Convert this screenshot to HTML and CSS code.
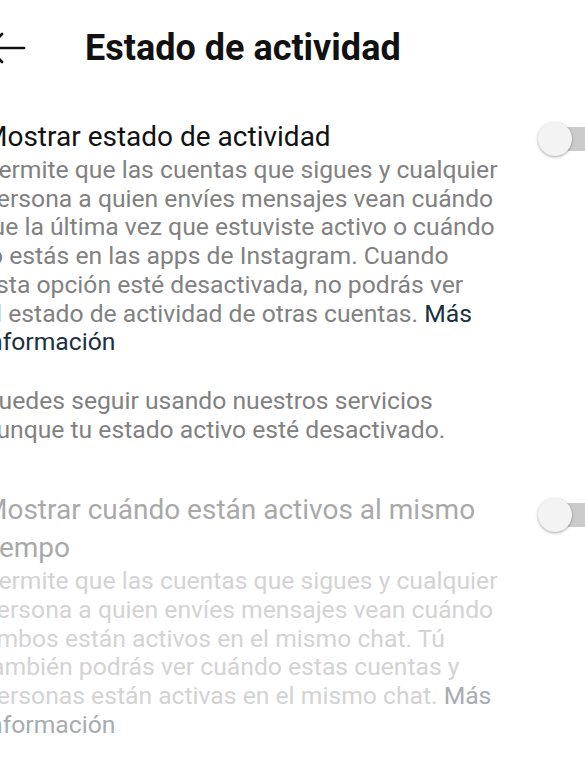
FILE: index.html
```html
<!DOCTYPE html>
<html lang="es">
<head>
<meta charset="UTF-8" />
<meta name="viewport" content="width=device-width, initial-scale=1.0" />
<title>Estado de actividad</title>
<link rel="stylesheet" href="styles.css">
</head>
<body>
<div class="page">
  <div class="header">
    <svg class="back" width="45" height="36" viewBox="0 0 45 36">
      <path d="M5 18 H41 M19 4 L5 18 L19 32" fill="none" stroke="#111" stroke-width="2.7" stroke-linecap="round" stroke-linejoin="round"/>
    </svg>
    <h1 class="title">Estado de actividad</h1>
  </div>

  <div class="section">
    <div class="row">
      <div class="text">
        <div class="label">Mostrar estado de actividad</div>
        <p class="desc">Permite que las cuentas que sigues y cualquier persona a quien envíes mensajes vean cuándo fue la última vez que estuviste activo o cuándo lo estás en las apps de Instagram. Cuando esta opción esté desactivada, no podrás ver el&nbsp;estado de actividad de otras cuentas. <span class="link">Más información</span></p>
        <p class="desc note">Puedes seguir usando nuestros servicios aunque tu estado activo esté desactivado.</p>
      </div>
      <div class="toggle"><div class="knob"></div></div>
    </div>
  </div>

  <div class="section disabled">
    <div class="row">
      <div class="text">
        <div class="label">Mostrar cuándo están activos al mismo tiempo</div>
        <p class="desc">Permite que las cuentas que sigues y cualquier persona a quien envíes mensajes vean cuándo ambos están activos en el mismo chat. Tú también podrás ver cuándo estas cuentas y personas están activas en el mismo chat. <span class="link">Más información</span></p>
      </div>
      <div class="toggle"><div class="knob"></div></div>
    </div>
  </div>
</div>
</body>
</html>
```

FILE: styles.css
```css
body{margin:0;padding:0;font-family:Roboto,"Noto Sans",sans-serif;background:#fff;overflow:hidden;}
.page{width:660px;margin-left:-17px;}
.header{display:flex;align-items:center;height:42px;padding-top:27px;}
.back{flex:none;}
.title{margin:0 0 0 57px;font-size:36px;font-weight:700;line-height:42px;color:#111;}
.section{padding-top:49px;}
.section + .section{padding-top:47px;}
.row{display:flex;align-items:flex-start;}
.text{width:515.5px;flex:none;}
.label{font-size:28px;line-height:38px;color:#121212;}
.desc{margin:0;font-size:24.7px;line-height:28.7px;color:#818181;}
.section:first-child .desc:first-of-type{margin-top:5px;}
.desc.note{margin-top:30px;}
.link{color:#1b3142;}
.toggle{position:relative;flex:none;margin:9px 0 0 37px;width:70px;height:24px;}
.toggle::before{content:"";position:absolute;left:18px;top:0;width:60px;height:24px;border-radius:12px;background:#cbcbcb;}
.knob{position:absolute;left:2px;top:-5px;width:34px;height:34px;border-radius:50%;background:#f3f3f3;box-shadow:0 1px 3px rgba(0,0,0,0.35);}
.disabled .toggle{margin-top:12px;}
.disabled .label{color:#a9a9a9;}
.disabled .desc{color:#d3d3d3;}
.disabled .link{color:#a6adb1;}
```
